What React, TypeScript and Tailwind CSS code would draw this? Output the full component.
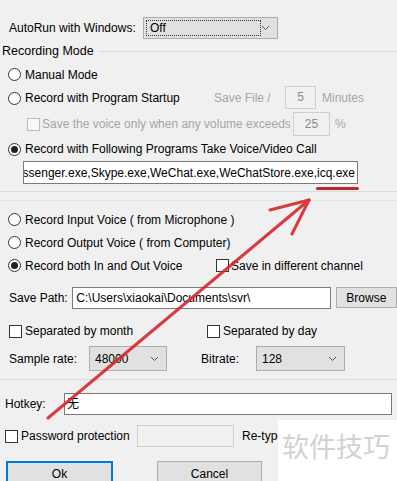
import React from 'react'

const Radio = ({ checked }: { checked?: boolean }) => (
  <span className="w-[13px] h-[13px] rounded-full border border-[#333] bg-white flex items-center justify-center shrink-0">
    {checked && <span className="w-[7px] h-[7px] rounded-full bg-[#222]" />}
  </span>
)

const Check = ({ disabled }: { disabled?: boolean }) => (
  <span
    className={`w-[13px] h-[13px] border shrink-0 ${disabled ? 'border-[#bcbcbc] bg-[#f7f7f7]' : 'border-[#333] bg-white'}`}
  />
)

const Chevron = () => (
  <svg width="9" height="6" viewBox="0 0 9 6" className="shrink-0">
    <path d="M1 1 L4.5 4.5 L8 1" fill="none" stroke="#555" strokeWidth="1" />
  </svg>
)

const Select = ({ value, width, focus }: { value: string; width: string; focus?: boolean }) => (
  <div className={`${width} h-full bg-[#e1e1e1] border border-[#adadad] flex items-center pl-[2px] pr-[7px]`}>
    <div className={`flex-1 h-[16px] flex items-center pl-[3px] ${focus ? 'border border-dotted border-[#333]' : ''}`}>
      {value}
    </div>
    <Chevron />
  </div>
)

export default function App() {
  return (
    <div
      className="relative w-[397px] h-[481px] overflow-hidden bg-[#f0f0f0] text-black text-[12px] leading-none"
      style={{ fontFamily: '"Liberation Sans", Arial, "Noto Sans CJK SC", sans-serif' }}
    >
      <div className="flex flex-col pt-[17px]">
        {/* AUTORUN */}
        <div className="h-[22px] flex items-center pl-[9px]">
          <span className="w-[134px]">AutoRun with Windows:</span>
          <Select value="Off" width="w-[135px]" focus />
        </div>

        {/* RECORDING MODE GROUP */}
        <div className="h-[24px] flex items-center pl-[2px]">
          <span className="text-[12.5px]">Recording Mode</span>
          <span className="flex-1 ml-[4px] border-t border-[#dcdcdc]" />
        </div>
        <div className="h-[23px] flex items-center pl-[8px] gap-[4px]">
          <Radio />
          <span>Manual Mode</span>
        </div>
        <div className="h-[24px] flex items-center pl-[8px]">
          <Radio />
          <span className="ml-[4px] w-[189px]">Record with Program Startup</span>
          <span className="text-[#a6a6a6] w-[71px]">Save File /</span>
          <div className="w-[31px] h-[23px] border border-[#cfcfcf] flex items-center justify-center text-[#8a8a8a] -mt-[2px]">
            5
          </div>
          <span className="ml-[6px] text-[#a6a6a6]">Minutes</span>
        </div>
        <div className="h-[28px] flex items-center pl-[27px]">
          <Check disabled />
          <span className="ml-[1px] w-[252px] text-[#a6a6a6] pl-[1px]">Save the voice only when any volume exceeds</span>
          <div className="w-[37px] h-[24px] border border-[#cfcfcf] flex items-center justify-center text-[#8a8a8a]">
            25
          </div>
          <span className="ml-[5px] text-[#a6a6a6]">%</span>
        </div>
        <div className="h-[22px] flex items-center pl-[8px] gap-[4px]">
          <Radio checked />
          <span>Record with Following Programs Take Voice/Video Call</span>
        </div>
        <div className="mt-[1px] ml-[23px] w-[335px] h-[23px] bg-white border border-[#7a7a7a] flex items-center justify-end overflow-hidden pr-[2px]">
          <span className="whitespace-nowrap">Messenger.exe,Skype.exe,WeChat.exe,WeChatStore.exe,icq.exe</span>
        </div>
        <div className="mt-[7px] border-t border-[#dcdcdc]" />
        <div className="mt-[8px] border-t border-[#e4e4e4]" />

        {/* VOICE SOURCE */}
        <div className="mt-[7px] h-[23px] flex items-center pl-[8px] gap-[4px]">
          <Radio />
          <span>Record Input Voice ( from Microphone )</span>
        </div>
        <div className="h-[23px] flex items-center pl-[8px] gap-[4px]">
          <Radio />
          <span>Record Output Voice ( from Computer)</span>
        </div>
        <div className="h-[23px] flex items-center pl-[8px]">
          <Radio checked />
          <span className="ml-[4px] w-[191px]">Record both In and Out Voice</span>
          <Check />
          <span className="ml-[2px]">Save in different channel</span>
        </div>

        {/* SAVE PATH */}
        <div className="mt-[10px] h-[22px] flex items-center pl-[9px]">
          <span className="w-[64px]">Save Path:</span>
          <div className="w-[261px] h-full bg-white border border-[#7a7a7a] flex items-center pl-[3px]">
            C:\Users\xiaokai\Documents\svr\
          </div>
          <div className="ml-[5px] w-[62px] h-[21px] bg-[#e1e1e1] border border-[#adadad] flex items-center justify-center -mt-[1px]">
            Browse
          </div>
        </div>

        <div className="mt-[11px] h-[22px] flex items-center pl-[9px]">
          <Check />
          <span className="ml-[3px] w-[182px]">Separated by month</span>
          <Check />
          <span className="ml-[3px]">Separated by day</span>
        </div>

        <div className="mt-[4px] h-[25px] flex items-center pl-[9px]">
          <span className="w-[80px]">Sample rate:</span>
          <Select value="48000" width="w-[78px]" />
          <span className="ml-[34px] w-[55px]">Bitrate:</span>
          <Select value="128" width="w-[89px]" />
        </div>

        <div className="mt-[8px] border-t border-[#dcdcdc]" />

        {/* HOTKEY */}
        <div className="mt-[13px] h-[22px] flex items-center pl-[5px]">
          <span className="w-[59px]">Hotkey:</span>
          <div className="w-[328px] h-full bg-white border border-[#7a7a7a] flex items-center pl-[2px]">
            无
          </div>
        </div>

        <div className="mt-[10px] h-[22px] flex items-center pl-[5px]">
          <Check />
          <span className="ml-[3px] w-[116px]">Password protection</span>
          <div className="w-[97px] h-full bg-[#f0f0f0] border border-[#cfcfcf]" />
          <span className="ml-[8px]">Re-type</span>
        </div>

        {/* BUTTONS */}
        <div className="mt-[14px] h-[26px] flex items-start pl-[6px]">
          <div className="w-[107px] h-[26px] bg-[#e1e1e1] border-2 border-[#0078d7] flex items-center justify-center">
            Ok
          </div>
          <div className="ml-[44px] w-[105px] h-[26px] bg-[#e1e1e1] border border-[#adadad] flex items-center justify-center">
            Cancel
          </div>
        </div>
      </div>

      {/* WATERMARK */}
      <div className="absolute left-[278px] top-[420px] w-[119px] h-[61px] bg-white flex items-start pl-[4px] pt-[12px]">
        <span
          className="text-[27px] text-[#d2d2d2]"
          style={{ fontFamily: '"Noto Sans CJK SC", sans-serif' }}
        >
          软件技巧
        </span>
      </div>

      {/* ANNOTATIONS */}
      <div className="absolute left-[316px] top-[187px] w-[43px] h-[3px] rounded-full bg-[#c0262b]" />
      <svg className="absolute inset-0 pointer-events-none" width="397" height="481" viewBox="0 0 397 481">
        <g stroke="#d6282c" strokeWidth="3" strokeLinecap="round" fill="none" opacity="0.9">
          <path d="M48 418 L309 200" />
          <path d="M309 200 L270 210" />
          <path d="M309 200 L292 234" />
        </g>
      </svg>
    </div>
  )
}
